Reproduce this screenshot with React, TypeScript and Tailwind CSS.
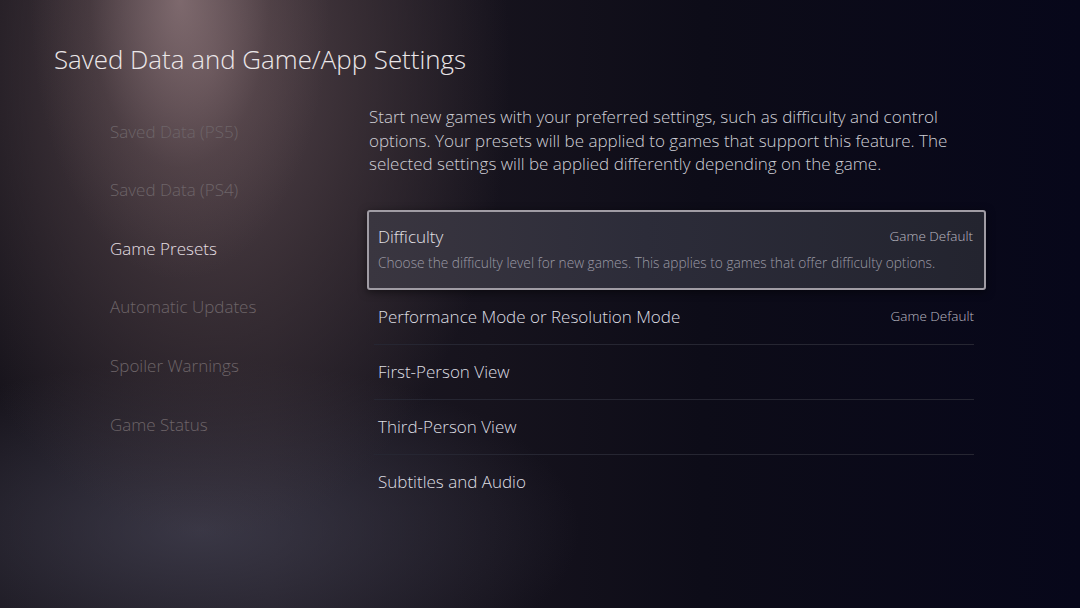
import React from 'react';

const menu = [
  { label: 'Saved Data (PS5)', active: false },
  { label: 'Saved Data (PS4)', active: false },
  { label: 'Game Presets', active: true },
  { label: 'Automatic Updates', active: false },
  { label: 'Spoiler Warnings', active: false },
  { label: 'Game Status', active: false },
];

const rows = [
  { label: 'Performance Mode or Resolution Mode', value: 'Game Default' },
  { label: 'First-Person View', value: '' },
  { label: 'Third-Person View', value: '' },
  { label: 'Subtitles and Audio', value: '' },
];

export default function App() {
  return (
    <div className="relative w-[1080px] h-[608px] overflow-hidden font-['Open_Sans',sans-serif] font-light bg-[#0a0a16]">
      {/* spotlight + haze */}
      <div className="pointer-events-none absolute inset-0 bg-[radial-gradient(ellipse_150px_280px_at_180px_0px,rgba(160,135,138,0.6),rgba(120,98,100,0.2)_60%,transparent_100%),radial-gradient(ellipse_300px_470px_at_210px_70px,#54444a_0%,rgba(64,52,58,0.75)_50%,transparent_100%),radial-gradient(ellipse_380px_170px_at_200px_530px,rgba(68,66,82,0.75),transparent_100%),linear-gradient(90deg,#16131b_0%,#1d1922_25%,#16131d_45%,#0d0c18_65%,#07071a_100%)]" />

      <div className="relative flex flex-col">
        <h1 className="pl-[54px] pt-[43px] pb-[27px] text-[25.9px] leading-[32px] text-[#ebe7e9] font-light">
          Saved Data and Game/App Settings
        </h1>

        <div className="flex">
          <nav className="w-[367px] pl-[110px] flex flex-col">
            {menu.map((m) => (
              <div
                key={m.label}
                className={`h-[58.6px] flex items-center text-[17px] ${m.active ? 'text-[#e4dfe2]' : 'text-[#6d6468]'}`}
              >
                {m.label}
              </div>
            ))}
          </nav>

          <section className="w-[619px] flex flex-col">
            <p className="pl-[2px] pr-[10px] pt-[3px] text-[17px] leading-[23.5px] text-[#cfcfd6]">
              Start new games with your preferred settings, such as difficulty and control options. Your presets will be
              applied to games that support this feature. The selected settings will be applied differently depending on
              the game.
            </p>

            <div className="mt-[34px] h-[80px] border-2 border-[#a09ca4] rounded-[3px] bg-[linear-gradient(90deg,#3a3640_0%,#2c2c39_45%,#23242f_100%)] shadow-[0_2px_8px_rgba(0,0,0,0.5)] pl-[9px] pr-[11px] pt-[14px] flex flex-col">
              <div className="flex items-center justify-between h-[22px]">
                <span className="text-[17px] text-[#e2e1e6]">Difficulty</span>
                <span className="text-[13.5px] text-[#b9b8c0]">Game Default</span>
              </div>
              <div className="mt-[7px] h-[18px] flex items-center text-[13.7px] text-[#9b9aa5] whitespace-nowrap">
                Choose the difficulty level for new games. This applies to games that offer difficulty options.
              </div>
            </div>

            <div className="ml-[7px] mr-[12px] flex flex-col">
              {rows.map((r, i) => (
                <div
                  key={r.label}
                  className={`h-[55px] flex items-center justify-between pl-[4px] ${i < rows.length - 1 ? 'border-b border-[#262632]' : ''}`}
                >
                  <span className="text-[17px] text-[#dddde2]">{r.label}</span>
                  {r.value && <span className="text-[13.5px] text-[#b9b8c0]">{r.value}</span>}
                </div>
              ))}
            </div>
          </section>
        </div>
      </div>
    </div>
  );
}
